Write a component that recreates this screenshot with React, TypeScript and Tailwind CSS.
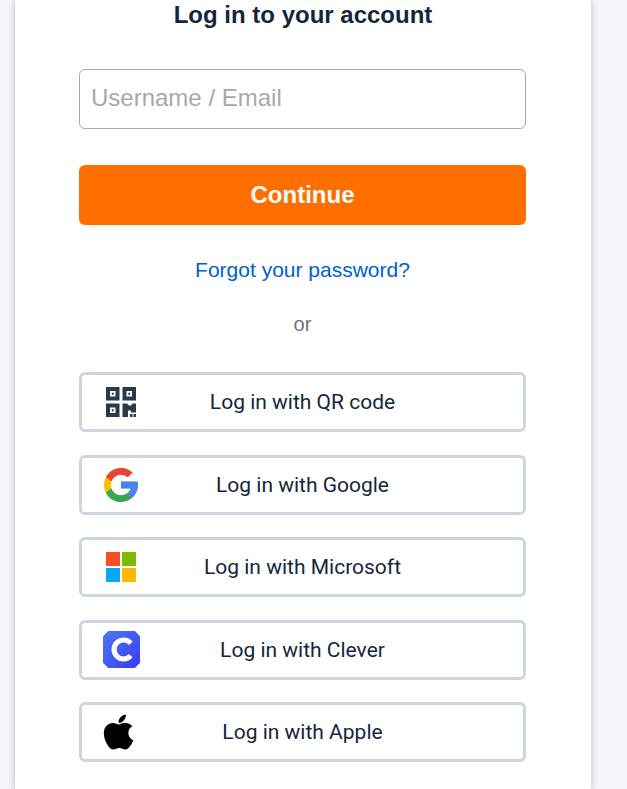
const QrIcon = () => (
  <svg width="32" height="32" viewBox="0 0 32 32">
    <g fill="#2b3a48">
      <path fillRule="evenodd" d="M1 1h13.5v13.5H1zM5 5v5.5h5.5V5zM6.8 6.8h1.9v1.9H6.8z" />
      <path fillRule="evenodd" d="M17.5 1H31v13.5H17.5zM21.5 5v5.5H27V5zM23.3 6.8h1.9v1.9h-1.9z" />
      <path fillRule="evenodd" d="M1 17.5h13.5V31H1zM5 21.5V27h5.5v-5.5zM6.8 23.3h1.9v1.9H6.8z" />
      <path d="M17.5 17.5h4.5l2 2h2l1.5-2H31v9h-5v-2h-3v6.5h-5.500zM25 28h2.500v3H25zM28.500 28H31v3h-2.500z" />
    </g>
  </svg>
);

const GoogleIcon = () => (
  <svg width="34" height="34" viewBox="4 4 40 40">
    <path fill="#FBBC05" d="M43.6 20.1H42V20H24v8h11.3C33.7 32.7 29.2 36 24 36c-6.6 0-12-5.4-12-12s5.4-12 12-12c3.1 0 5.8 1.2 8 3l5.7-5.7C34 6.1 29.3 4 24 4 13 4 4 13 4 24s9 20 20 20 20-9 20-20c0-1.3-.1-2.7-.4-3.9z" />
    <path fill="#EA4335" d="M6.3 14.7l6.6 4.8C14.7 15.1 19 12 24 12c3.1 0 5.8 1.2 8 3l5.7-5.7C34 6.1 29.3 4 24 4 16.3 4 9.700 8.300 6.300 14.700z" />
    <path fill="#34A853" d="M24 44c5.2 0 9.9-2 13.4-5.2l-6.2-5.2C29.2 35.1 26.7 36 24 36c-5.2 0-9.6-3.3-11.3-8l-6.5 5C9.500 39.600 16.200 44 24 44z" />
    <path fill="#4285F4" d="M43.6 20.1H42V20H24v8h11.3c-.8 2.2-2.2 4.2-4.1 5.6l6.2 5.2C37 39.2 44 34 44 24c0-1.3-.1-2.7-.4-3.900z" />
  </svg>
);

const MicrosoftIcon = () => (
  <svg width="32" height="32" viewBox="0 0 32 32">
    <rect x="1" y="1" width="14" height="14" fill="#F4511E" />
    <rect x="17" y="1" width="14" height="14" fill="#7FB900" />
    <rect x="1" y="17" width="14" height="14" fill="#03A9F4" />
    <rect x="17" y="17" width="14" height="14" fill="#FFB900" />
  </svg>
);

const CleverIcon = () => (
  <svg width="37" height="37" viewBox="1 1 36 36">
    <defs>
      <linearGradient id="clever" x1="0" y1="0" x2="1" y2="1">
        <stop offset="0" stopColor="#4a78f5" />
        <stop offset="1" stopColor="#3b3cf0" />
      </linearGradient>
    </defs>
    <path fill="url(#clever)" d="M6 1h26l5 5v26l-5 5H6l-5-5V6z" />
    <path fill="none" stroke="#fff" strokeWidth="5" d="M28 13c-1.800-2.100-4.300-3.200-7-3.200-5.100 0-9.200 4.100-9.200 9.200s4.100 9.200 9.200 9.200c2.700 0 5.200-1.100 7-3.200" />
  </svg>
);

const AppleIcon = () => (
  <svg width="31" height="40" viewBox="0 0 384 512">
    <path fill="#000" d="M318.7 268.7c-.2-36.7 16.4-64.4 50-84.8-18.8-26.9-47.2-41.7-84.7-44.6-35.5-2.8-74.3 20.7-88.5 20.7-15 0-49.4-19.7-76.4-19.7C63.3 141.2 4 184.8 4 273.5q0 39.3 14.4 81.2c12.8 36.7 59 126.7 107.2 125.2 25.2-.6 43-17.9 75.8-17.9 31.8 0 48.3 17.9 76.4 17.9 48.6-.7 90.4-82.5 102.6-119.3-65.2-30.7-61.7-90-61.7-91.9zm-56.6-164.2c27.3-32.4 24.8-61.9 24-72.5-24.1 1.4-52 16.4-67.9 34.9-17.5 19.8-27.8 44.3-25.6 71.9 26.1 2 49.9-11.4 69.5-34.3z" />
  </svg>
);

const providers = [
  { label: "Log in with QR code", icon: <QrIcon />, slot: "pl-[23px]" },
  { label: "Log in with Google", icon: <GoogleIcon />, slot: "pl-[22px]" },
  { label: "Log in with Microsoft", icon: <MicrosoftIcon />, slot: "pl-[23px]" },
  { label: "Log in with Clever", icon: <CleverIcon />, slot: "pl-[20.5px]" },
  { label: "Log in with Apple", icon: <AppleIcon />, slot: "pl-[21px]" },
];

export default function App() {
  return (
    <div className="h-[789px] overflow-hidden bg-[#f4f6fb] font-['Liberation_Sans',sans-serif]">
      <main className="ml-[15px] h-full w-[576px] bg-white pl-16 shadow-[0_0_7px_rgba(0,0,0,0.25)]">
        <div className="w-[447px]">
          <h1 className="pl-px text-center text-2xl leading-[30px] font-bold text-[#15263a]">
            Log in to your account
          </h1>

          <input
            placeholder="Username / Email"
            className="mt-[39px] block h-[60px] w-full rounded-md border border-[#a3a9b3] bg-white px-[11px] pb-0.5 text-2xl text-[#15263a] outline-none placeholder:text-[#a3a9b3]"
          />

          <button className="mt-9 block h-[60px] w-full rounded-md bg-[#ff6f00] text-2xl font-bold text-white">
            Continue
          </button>

          <a className="mt-[33px] block text-center text-[21px] leading-[24px] text-[#0060d0]">
            Forgot your password?
          </a>

          <p className="mt-[30px] text-center text-xl leading-[24px] text-[#6b7280]">or</p>

          <div className="mt-9 flex flex-col gap-[22.5px]">
            {providers.map((p) => (
              <button
                key={p.label}
                className="relative flex h-[60px] w-full items-center justify-center rounded-md border-[3px] border-[#cdd5e0] bg-white pt-0.5 font-['Roboto',sans-serif] text-[21px] text-[#15263a]"
              >
                <span className={`absolute inset-y-0 left-0 flex items-center ${p.slot}`}>{p.icon}</span>
                {p.label}
              </button>
            ))}
          </div>
        </div>
      </main>
    </div>
  );
}
